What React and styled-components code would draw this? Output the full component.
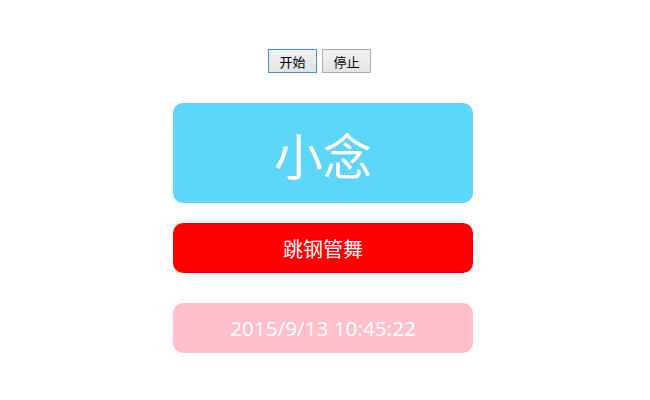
import styled, { createGlobalStyle } from 'styled-components';

const GlobalStyle = createGlobalStyle`
    body {
        margin: 0;
        background: #fff;
        font-family: "Noto Sans CJK SC", "Noto Sans", sans-serif;
    }
`;

export default function App() {
    return (
        <Page>
            <GlobalStyle />
            <Toolbar>
                <Button $focused>开始</Button>
                <Button>停止</Button>
            </Toolbar>
            <Column>
                <NameBox>小念</NameBox>
                <ActionBox>跳钢管舞</ActionBox>
                <TimeBox>2015/9/13 10:45:22</TimeBox>
            </Column>
        </Page>
    );
}

const Page = styled.div`
    width: 650px;
    height: 400px;
    padding-top: 49px;
    box-sizing: border-box;
`;

const Toolbar = styled.div`
    display: flex;
    gap: 5px;
    padding-left: 268px;
    height: 24px;
`;

const Button = styled.button`
    height: 24px;
    width: 49px;
    padding: 0;
    font-family: "Noto Sans CJK SC", sans-serif;
    font-size: 13px;
    line-height: 1;
    color: #000;
    background: linear-gradient(#f2f2f2, #e3e3e3);
    border: 1px solid ${({ $focused }) => ($focused ? '#3c8fe6' : '#adadad')};
    border-radius: 0;
`;

const Column = styled.div`
    display: flex;
    flex-direction: column;
    width: 300px;
    margin: 30px 0 0 173px;
`;

const Box = styled.div`
    display: flex;
    align-items: center;
    justify-content: center;
    width: 300px;
    border-radius: 10px;
    color: #fff;
`;

const NameBox = styled(Box)`
    height: 100px;
    background: #5cd6f9;
    font-size: 49px;
`;

const ActionBox = styled(Box)`
    height: 50px;
    margin-top: 20px;
    background: #ff0000;
    font-size: 20px;
`;

const TimeBox = styled(Box)`
    height: 50px;
    margin-top: 30px;
    background: pink;
    font-family: "Noto Sans", "Noto Sans CJK SC", sans-serif;
    font-size: 20.7px;
`;
